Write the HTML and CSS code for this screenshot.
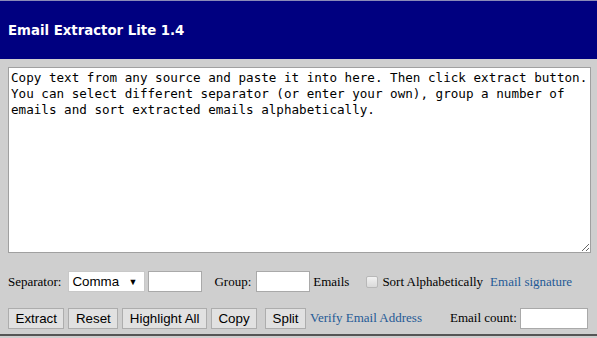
FILE: index.html
```html
<!DOCTYPE html>
<html>
<head>
<meta charset="utf-8">
<link rel="stylesheet" href="styles.css">
</head>
<body>
<div class="page">
  <div class="header"><span class="title">Email Extractor Lite 1.4</span></div>
  <div class="main">
    <textarea class="source">Copy text from any source and paste it into here. Then click extract button.
You can select different separator (or enter your own), group a number of
emails and sort extracted emails alphabetically.</textarea>
    <div class="row row1">
      <span class="label">Separator:</span>
      <span class="select"><span class="select-text">Comma</span><span class="arrow">▼</span></span>
      <input class="field sep" type="text">
      <span class="label group-label">Group:</span>
      <input class="field grp" type="text">
      <span class="label">Emails</span>
      <span class="check"></span>
      <span class="label">Sort Alphabetically</span>
      <a class="link sig">Email signature</a>
    </div>
    <div class="row row2">
      <button class="btn">Extract</button>
      <button class="btn">Reset</button>
      <button class="btn">Highlight All</button>
      <button class="btn">Copy</button>
      <button class="btn split">Split</button>
      <a class="link verify">Verify Email Address</a>
      <span class="label count-label">Email count:</span>
      <input class="field count" type="text">
    </div>
  </div>
</div>
</body>
</html>
```
FILE: styles.css
```css
html, body {
  margin: 0;
  padding: 0;
  background: #cfcfcf;
}
.page {
  width: 597px;
  height: 336px;
  border-bottom: 2px solid #555;
  box-sizing: border-box;
  overflow: hidden;
}
.header {
  height: 59px;
  background: #000080;
  border-top: 1px solid #8a8ab8;
  box-sizing: border-box;
  display: flex;
  align-items: center;
  padding-left: 8px;
}
.title {
  color: #fff;
  font-family: "DejaVu Sans", Verdana, sans-serif;
  font-weight: bold;
  font-size: 13.3px;
  padding-top: 1px;
}
.main {
  padding: 8px 0 0 8px;
}
.source {
  display: block;
  width: 583px;
  height: 186px;
  box-sizing: border-box;
  margin: 0;
  border: 1px solid #a0a0a0;
  background: #fff;
  padding: 2px 2px;
  font-family: "DejaVu Sans Mono", monospace;
  font-size: 12.6px;
  line-height: 16px;
  color: #000;
  resize: both;
}
.row {
  display: flex;
  align-items: center;
  font-family: "Liberation Serif", "Times New Roman", serif;
  font-size: 13px;
  color: #000;
}
.row > * {
  flex-shrink: 0;
  white-space: nowrap;
}
.row1 {
  margin-top: 18px;
  height: 21px;
}
.row2 {
  margin-top: 15px;
  height: 22px;
}
.select {
  display: inline-flex;
  align-items: center;
  justify-content: space-between;
  width: 77px;
  height: 21px;
  box-sizing: border-box;
  background: #fff;
  border: 1px solid #c8c8c8;
  margin-left: 7px;
  padding: 0 7px 0 3px;
  font-family: "Liberation Sans", Arial, sans-serif;
  font-size: 13.33px;
}
.arrow {
  font-size: 9px;
}
.field {
  height: 21px;
  box-sizing: border-box;
  border: 1px solid #a9a9a9;
  background: #fff;
  margin: 0;
  padding: 0;
}
.sep {
  width: 54px;
  margin-left: 3px;
}
.group-label {
  margin-left: 12px;
}
.grp {
  width: 54px;
  margin-left: 5px;
  margin-right: 3px;
}
.check {
  width: 12px;
  height: 12px;
  border: 1px solid #b8b8b8;
  border-radius: 2px;
  background: linear-gradient(#f2f2f2, #dadada);
  margin-left: 17px;
  margin-right: 4px;
  box-sizing: border-box;
}
.link {
  color: #1f5a96;
}
.sig {
  margin-left: 7px;
}
.btn {
  height: 21px;
  box-sizing: border-box;
  margin: 0 4px 0 0;
  padding: 0 6.5px;
  font-family: "Liberation Sans", Arial, sans-serif;
  font-size: 13.33px;
  background: #e1e1e1;
  border: 1px solid #adadad;
  color: #000;
}
.split {
  margin-left: 4px;
  margin-right: 4px;
}
.count-label {
  margin-left: 28px;
  margin-right: 3px;
}
.count {
  width: 68px;
  height: 21px;
}
```
